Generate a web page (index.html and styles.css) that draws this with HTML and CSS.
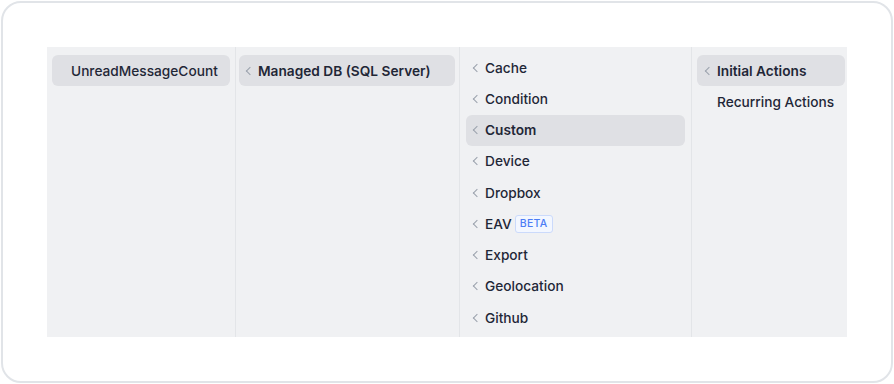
FILE: index.html
```html
<!DOCTYPE html>
<html lang="en">
<head>
  <meta charset="UTF-8">
  <title>Column browser</title>
  <link rel="stylesheet" href="styles.css">
</head>
<body>

  <div class="card">
    <div class="browser">

      <!-- Spalte 1 -->
      <div class="column col-1">
        <div class="item active"><span class="chev hidden"></span>UnreadMessageCount</div>
      </div>

      <!-- Spalte 2 -->
      <div class="column col-2">
        <div class="item active open"><span class="chev"></span>Managed DB (SQL Server)</div>
      </div>

      <!-- Spalte 3 -->
      <div class="column col-3">
        <div class="item"><span class="chev"></span>Cache</div>
        <div class="item"><span class="chev"></span>Condition</div>
        <div class="item active open"><span class="chev"></span>Custom</div>
        <div class="item"><span class="chev"></span>Device</div>
        <div class="item"><span class="chev"></span>Dropbox</div>
        <div class="item"><span class="chev"></span>EAV <span class="badge">BETA</span></div>
        <div class="item"><span class="chev"></span>Export</div>
        <div class="item"><span class="chev"></span>Geolocation</div>
        <div class="item"><span class="chev"></span>Github</div>
      </div>

      <!-- Spalte 4 -->
      <div class="column col-4">
        <div class="item active open"><span class="chev"></span>Initial Actions</div>
        <div class="item"><span class="chev hidden"></span>Recurring Actions</div>
      </div>

    </div>
  </div>

</body>
</html>
```

FILE: styles.css
```css
body {
  margin: 0;
  padding: 1px;
  font-family: Inter, "Noto Sans", sans-serif;
  background: #fff;
}
.card {
  box-sizing: border-box;
  width: 892px;
  height: 382px;
  border: 2px solid #e1e4e8;
  border-radius: 20px;
  padding: 44px;
  background: #fff;
}
.browser {
  display: flex;
  height: 290px;
  background: #f0f1f3;
  overflow: hidden;
}
.column {
  box-sizing: border-box;
  border-right: 1px solid #e3e5e8;
  padding: 8px 5px;
}
.col-1 { width: 189px; }
.col-2 { width: 224px; padding: 8px 4px 8px 3px; }
.col-3 { width: 232px; padding: 5px 6px; }
.col-4 { flex: 1; border-right: none; padding: 8px 2px 8px 5px; }
.col-4 .item { padding-left: 7px; }

.item {
  display: flex;
  align-items: center;
  height: 31.25px;
  padding-left: 6px;
  border-radius: 6px;
  font-size: 13.7px;
  font-weight: 500;
  color: #1f2737;
  white-space: nowrap;
}
.item.active {
  background: #dfe0e4;
}
.item.open {
  font-weight: 600;
}
.chev {
  display: inline-block;
  flex: none;
  width: 5px;
  height: 5px;
  margin: 0 5px 0 2px;
  border-left: 1.5px solid #9aa1ac;
  border-bottom: 1.5px solid #9aa1ac;
  transform: rotate(45deg);
}
.chev.hidden {
  visibility: hidden;
}
.badge {
  margin-left: 3px;
  padding: 1px 4px;
  border: 1px solid #cbdafb;
  border-radius: 3px;
  background: #f3f7ff;
  color: #4c7df5;
  font-size: 10.5px;
  font-weight: 500;
  letter-spacing: 0.3px;
  line-height: 14px;
}
```
